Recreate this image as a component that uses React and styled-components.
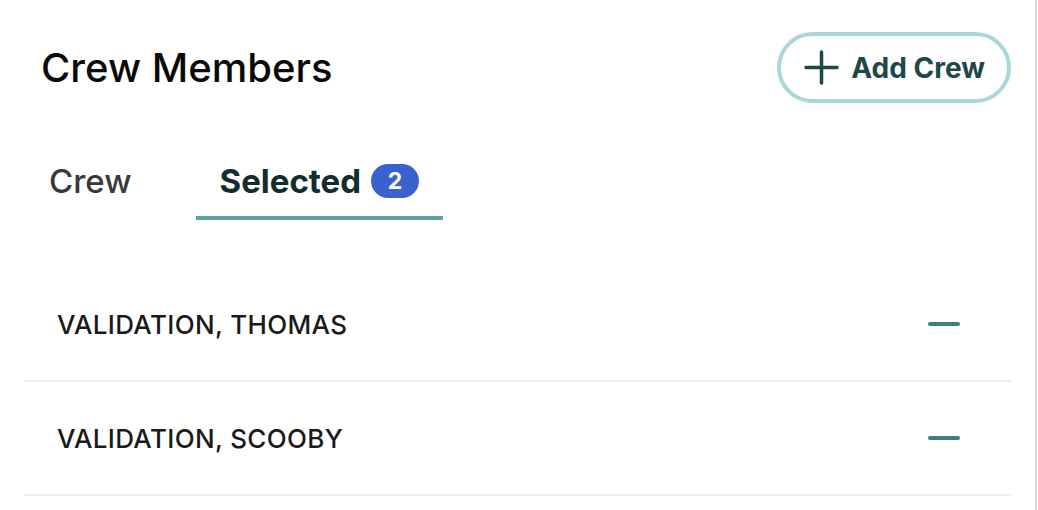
import React from "react";
import styled, { createGlobalStyle } from "styled-components";

const GlobalStyle = createGlobalStyle`
  body {
    margin: 0;
    background: #ffffff;
    font-family: Inter, "Liberation Sans", sans-serif;
  }
`;

const Panel = styled.div`
  box-sizing: border-box;
  width: 1037px;
  min-height: 510px;
  border-right: 2px solid #d9d9d9;
  padding-top: 32px;
`;

const Header = styled.div`
  display: flex;
  align-items: center;
  justify-content: space-between;
  padding: 0 24px 0 41px;
`;

const Title = styled.h1`
  margin: 0;
  font-size: 40px;
  font-weight: 500;
  letter-spacing: 0;
  color: #0a0a0a;
`;

const AddButton = styled.button`
  box-sizing: border-box;
  height: 71px;
  display: flex;
  align-items: center;
  gap: 12px;
  padding: 0 22px 0 23px;
  border: 4px solid #abd7d9;
  border-radius: 36px;
  background: #ffffff;
  color: #1e4748;
  font-family: inherit;
  font-size: 28px;
  font-weight: 700;
  cursor: pointer;
`;

const Tabs = styled.div`
  display: flex;
  gap: 40px;
  margin-top: 58px;
  padding-left: 25px;
`;

const Tab = styled.div`
  display: flex;
  align-items: center;
  gap: 10px;
  height: 40px;
  padding: 0 24px 15px;
  border-bottom: 4px solid ${(p) => (p.$active ? "#5ba3a3" : "transparent")};
  font-size: 33px;
  font-weight: ${(p) => (p.$active ? 700 : 500)};
  color: ${(p) => (p.$active ? "#132c2f" : "#393939")};
`;

const Badge = styled.span`
  display: inline-flex;
  align-items: center;
  justify-content: center;
  width: 48px;
  height: 34px;
  border-radius: 17px;
  background: #3a62cf;
  color: #ffffff;
  font-size: 23px;
  font-weight: 700;
`;

const List = styled.ul`
  list-style: none;
  margin: 48px 24px 0;
  padding: 0;
`;

const Row = styled.li`
  display: flex;
  align-items: center;
  justify-content: space-between;
  height: 112px;
  padding: 0 51px 0 33px;
  border-bottom: 2px solid #ececec;
  font-size: 26px;
  font-weight: 500;
  letter-spacing: 0.35px;
  color: #1a1a1a;
`;

const RemoveButton = styled.button`
  display: flex;
  padding: 0;
  border: none;
  background: none;
  cursor: pointer;
`;

const PlusIcon = () => (
  <svg width="35" height="35" viewBox="0 0 35 35" fill="none">
    <path
      d="M17.5 2v31M2 17.5h31"
      stroke="#1e4748"
      strokeWidth="3.5"
      strokeLinecap="round"
    />
  </svg>
);

const MinusIcon = () => (
  <svg width="32" height="6" viewBox="0 0 32 6" fill="none">
    <path d="M2 3h28" stroke="#3f7f80" strokeWidth="4" strokeLinecap="round" />
  </svg>
);

const crew = ["VALIDATION, THOMAS", "VALIDATION, SCOOBY"];

export default function App() {
  return (
    <Panel>
      <GlobalStyle />
      <Header>
        <Title>Crew Members</Title>
        <AddButton>
          <PlusIcon />
          Add Crew
        </AddButton>
      </Header>
      <Tabs>
        <Tab>Crew</Tab>
        <Tab $active>
          Selected
          <Badge>{crew.length}</Badge>
        </Tab>
      </Tabs>
      <List>
        {crew.map((name) => (
          <Row key={name}>
            {name}
            <RemoveButton aria-label={`Remove ${name}`}>
              <MinusIcon />
            </RemoveButton>
          </Row>
        ))}
      </List>
    </Panel>
  );
}
